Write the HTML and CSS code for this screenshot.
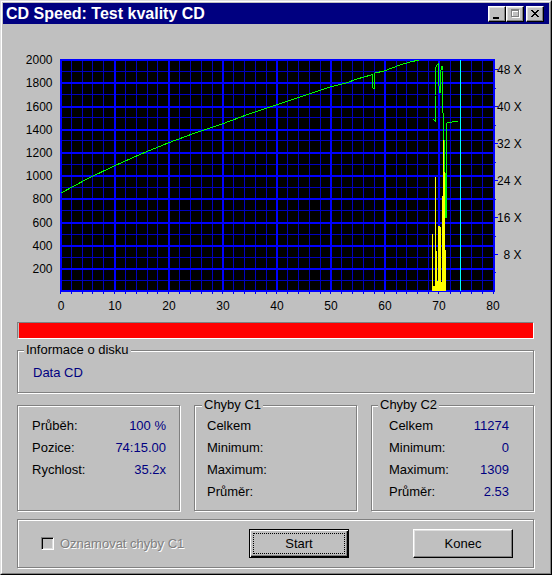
FILE: index.html
```html
<!DOCTYPE html>
<html lang="cs">
<head>
<meta charset="utf-8">
<title>CD Speed: Test kvality CD</title>
<link rel="stylesheet" href="styles.css">
</head>
<body>
<div class="window">
  <div class="frame">
    <div class="titlebar">
      <span class="title">CD Speed: Test kvality CD</span>
      <div class="tb-buttons">
        <span class="tb-btn"><svg class="tb-glyph" width="16" height="14" viewBox="0 0 16 14"><rect x="4" y="10" width="6" height="2" class="g-black"/></svg></span>
        <span class="tb-btn"><svg class="tb-glyph" width="16" height="14" viewBox="0 0 16 14"><path class="g-white" d="M5 3h8v2h-8z M5 5h1v6h-1z M12 5h1v6h-1z M5 10h8v1h-8z"/><path class="g-gray" d="M4 2h8v2h-8z M4 4h1v6h-1z M11 4h1v6h-1z M4 9h8v1h-8z"/></svg></span>
        <span class="tb-btn tb-close"><svg class="tb-glyph" width="16" height="14" viewBox="0 0 16 14"><path class="g-black" d="M4 3h2v1h-2z M10 3h2v1h-2z M5 4h2v1h-2z M9 4h2v1h-2z M6 5h4v1h-4z M7 6h2v1h-2z M6 7h4v1h-4z M5 8h2v1h-2z M9 8h2v1h-2z M4 9h2v1h-2z M10 9h2v1h-2z"/></svg></span>
      </div>
    </div>
    <div class="client">
      <svg class="chart" width="546" height="292" viewBox="3 24 546 292" shape-rendering="crispEdges">
        <rect x="60" y="59" width="435" height="233" class="plot-bg"/>
        <g class="grid-minor">
          <rect x="60" y="71" width="435" height="1"/>
          <rect x="60" y="94" width="435" height="1"/>
          <rect x="60" y="117" width="435" height="1"/>
          <rect x="60" y="140" width="435" height="1"/>
          <rect x="60" y="164" width="435" height="1"/>
          <rect x="60" y="187" width="435" height="1"/>
          <rect x="60" y="210" width="435" height="1"/>
          <rect x="60" y="234" width="435" height="1"/>
          <rect x="60" y="257" width="435" height="1"/>
          <rect x="60" y="280" width="435" height="1"/>
          <rect x="71" y="59" width="1" height="233"/>
          <rect x="82" y="59" width="1" height="233"/>
          <rect x="92" y="59" width="1" height="233"/>
          <rect x="103" y="59" width="1" height="233"/>
          <rect x="125" y="59" width="1" height="233"/>
          <rect x="136" y="59" width="1" height="233"/>
          <rect x="147" y="59" width="1" height="233"/>
          <rect x="157" y="59" width="1" height="233"/>
          <rect x="179" y="59" width="1" height="233"/>
          <rect x="190" y="59" width="1" height="233"/>
          <rect x="201" y="59" width="1" height="233"/>
          <rect x="212" y="59" width="1" height="233"/>
          <rect x="233" y="59" width="1" height="233"/>
          <rect x="244" y="59" width="1" height="233"/>
          <rect x="255" y="59" width="1" height="233"/>
          <rect x="266" y="59" width="1" height="233"/>
          <rect x="287" y="59" width="1" height="233"/>
          <rect x="298" y="59" width="1" height="233"/>
          <rect x="309" y="59" width="1" height="233"/>
          <rect x="320" y="59" width="1" height="233"/>
          <rect x="341" y="59" width="1" height="233"/>
          <rect x="352" y="59" width="1" height="233"/>
          <rect x="363" y="59" width="1" height="233"/>
          <rect x="374" y="59" width="1" height="233"/>
          <rect x="396" y="59" width="1" height="233"/>
          <rect x="406" y="59" width="1" height="233"/>
          <rect x="417" y="59" width="1" height="233"/>
          <rect x="428" y="59" width="1" height="233"/>
          <rect x="450" y="59" width="1" height="233"/>
          <rect x="471" y="59" width="1" height="233"/>
          <rect x="482" y="59" width="1" height="233"/>
        </g>
        <g class="grid-major">
          <rect x="60" y="59" width="435" height="2"/>
          <rect x="60" y="82" width="435" height="2"/>
          <rect x="60" y="106" width="435" height="2"/>
          <rect x="60" y="129" width="435" height="2"/>
          <rect x="60" y="152" width="435" height="2"/>
          <rect x="60" y="175" width="435" height="2"/>
          <rect x="60" y="198" width="435" height="2"/>
          <rect x="60" y="222" width="435" height="2"/>
          <rect x="60" y="245" width="435" height="2"/>
          <rect x="60" y="268" width="435" height="2"/>
          <rect x="60" y="290" width="435" height="2"/>
          <rect x="60" y="59" width="2" height="233"/>
          <rect x="114" y="59" width="2" height="233"/>
          <rect x="168" y="59" width="2" height="233"/>
          <rect x="222" y="59" width="2" height="233"/>
          <rect x="276" y="59" width="2" height="233"/>
          <rect x="330" y="59" width="2" height="233"/>
          <rect x="384" y="59" width="2" height="233"/>
          <rect x="438" y="59" width="2" height="233"/>
          <rect x="493" y="59" width="2" height="233"/>
          <!-- bottom ticks -->
          <rect x="60" y="292" width="1" height="2"/><rect x="71" y="292" width="1" height="2"/><rect x="82" y="292" width="1" height="2"/><rect x="92" y="292" width="1" height="2"/><rect x="103" y="292" width="1" height="2"/>
          <rect x="114" y="292" width="1" height="2"/><rect x="125" y="292" width="1" height="2"/><rect x="136" y="292" width="1" height="2"/><rect x="147" y="292" width="1" height="2"/><rect x="157" y="292" width="1" height="2"/>
          <rect x="168" y="292" width="1" height="2"/><rect x="179" y="292" width="1" height="2"/><rect x="190" y="292" width="1" height="2"/><rect x="201" y="292" width="1" height="2"/><rect x="212" y="292" width="1" height="2"/>
          <rect x="222" y="292" width="1" height="2"/><rect x="233" y="292" width="1" height="2"/><rect x="244" y="292" width="1" height="2"/><rect x="255" y="292" width="1" height="2"/><rect x="266" y="292" width="1" height="2"/>
          <rect x="276" y="292" width="1" height="2"/><rect x="287" y="292" width="1" height="2"/><rect x="298" y="292" width="1" height="2"/><rect x="309" y="292" width="1" height="2"/><rect x="320" y="292" width="1" height="2"/>
          <rect x="330" y="292" width="1" height="2"/><rect x="341" y="292" width="1" height="2"/><rect x="352" y="292" width="1" height="2"/><rect x="363" y="292" width="1" height="2"/><rect x="374" y="292" width="1" height="2"/>
          <rect x="384" y="292" width="1" height="2"/><rect x="396" y="292" width="1" height="2"/><rect x="406" y="292" width="1" height="2"/><rect x="417" y="292" width="1" height="2"/><rect x="428" y="292" width="1" height="2"/>
          <rect x="438" y="292" width="1" height="2"/><rect x="450" y="292" width="1" height="2"/><rect x="460" y="292" width="1" height="2"/><rect x="471" y="292" width="1" height="2"/><rect x="482" y="292" width="1" height="2"/><rect x="493" y="292" width="1" height="2"/>
          <!-- right ticks -->
          <rect x="495" y="69" width="3" height="1"/>
          <rect x="495" y="106" width="3" height="1"/>
          <rect x="495" y="143" width="3" height="1"/>
          <rect x="495" y="180" width="3" height="1"/>
          <rect x="495" y="217" width="3" height="1"/>
          <rect x="495" y="254" width="3" height="1"/>
          <rect x="495" y="88" width="1" height="1"/>
          <rect x="495" y="125" width="1" height="1"/>
          <rect x="495" y="162" width="1" height="1"/>
          <rect x="495" y="199" width="1" height="1"/>
          <rect x="495" y="236" width="1" height="1"/>
          <rect x="495" y="272" width="1" height="1"/>
        </g>
        <g class="bars">
          <rect x="432" y="234" width="1" height="57"/>
          <rect x="433" y="286" width="2" height="5"/>
          <rect x="435" y="177" width="1" height="114"/>
          <rect x="436" y="251" width="1" height="40"/>
          <rect x="437" y="281" width="1" height="10"/>
          <rect x="438" y="226" width="2" height="65"/>
          <rect x="440" y="227" width="1" height="64"/>
          <rect x="441" y="282" width="1" height="9"/>
          <rect x="442" y="196" width="1" height="95"/>
          <rect x="443" y="139" width="1" height="152"/>
          <rect x="444" y="156" width="1" height="135"/>
          <rect x="445" y="250" width="1" height="41"/>
        </g>
        <polyline class="speed" points="61,193 87,179 114,166 141,154 168,143 195,133 222,124 249,114 276,105 303,96 330,87 342,84 346,83 357,79 371,75 372,74 373,88 374,89 375,73 384,71 400,65 410,62 419,60"/>
        <polyline class="speed" points="433,119 435,121 435,96 436,67 437,65 438,64 438,67 439,86 440,93 440,80 441,70 442,66 442,70 443,113 444,140 445,172 446,218 446,123 447,123 452,122 458,121"/>
        <rect x="460" y="60" width="1" height="231" class="cursor"/>
        <g class="axis-label">
          <text x="52.5" y="64" text-anchor="end">2000</text>
          <text x="52.5" y="87" text-anchor="end">1800</text>
          <text x="52.5" y="111" text-anchor="end">1600</text>
          <text x="52.5" y="134" text-anchor="end">1400</text>
          <text x="52.5" y="157" text-anchor="end">1200</text>
          <text x="52.5" y="180" text-anchor="end">1000</text>
          <text x="52.5" y="203" text-anchor="end">800</text>
          <text x="52.5" y="227" text-anchor="end">600</text>
          <text x="52.5" y="250" text-anchor="end">400</text>
          <text x="52.5" y="273" text-anchor="end">200</text>
          <text x="61" y="309.5" text-anchor="middle">0</text>
          <text x="115" y="309.5" text-anchor="middle">10</text>
          <text x="169" y="309.5" text-anchor="middle">20</text>
          <text x="223" y="309.5" text-anchor="middle">30</text>
          <text x="277" y="309.5" text-anchor="middle">40</text>
          <text x="331" y="309.5" text-anchor="middle">50</text>
          <text x="385" y="309.5" text-anchor="middle">60</text>
          <text x="439" y="309.5" text-anchor="middle">70</text>
          <text x="493" y="309.5" text-anchor="middle">80</text>
          <text x="497" y="74">48 X</text>
          <text x="497" y="111">40 X</text>
          <text x="497" y="148">32 X</text>
          <text x="497" y="184.5">24 X</text>
          <text x="497" y="221.5">16 X</text>
          <text x="503.5" y="258.5">8 X</text>
        </g>
      </svg>

      <div class="progress"><div class="progress-fill"></div></div>

      <div class="group info">
        <span class="group-label">Informace o disku</span>
        <div class="disc-type">Data CD</div>
      </div>

      <div class="stats">
        <div class="group stat-box box-status">
          <div class="row"><span>Průběh:</span><span class="val">100 %</span></div>
          <div class="row"><span>Pozice:</span><span class="val">74:15.00</span></div>
          <div class="row"><span>Rychlost:</span><span class="val">35.2x</span></div>
        </div>
        <div class="group stat-box box-c1">
          <span class="group-label label-c1">Chyby C1</span>
          <div class="row"><span>Celkem</span></div>
          <div class="row"><span>Minimum:</span></div>
          <div class="row"><span>Maximum:</span></div>
          <div class="row"><span>Průměr:</span></div>
        </div>
        <div class="group stat-box box-c2">
          <span class="group-label">Chyby C2</span>
          <div class="row"><span>Celkem</span><span class="val">11274</span></div>
          <div class="row"><span>Minimum:</span><span class="val">0</span></div>
          <div class="row"><span>Maximum:</span><span class="val">1309</span></div>
          <div class="row"><span>Průměr:</span><span class="val">2.53</span></div>
        </div>
      </div>

      <div class="group actions">
        <div class="check">
          <span class="checkbox"></span>
          <span class="check-text">Oznamovat chyby C1</span>
        </div>
        <button class="btn btn-default" type="button">Start</button>
        <button class="btn btn-close" type="button">Konec</button>
      </div>
    </div>
  </div>
</div>
</body>
</html>
```

FILE: styles.css
```css
html, body {
  margin: 0;
  padding: 0;
  background: #c0c0c0;
}

body {
  font-family: "Liberation Sans", Arial, sans-serif;
  font-size: 13px;
  color: #000;
}

.window {
  width: 552px;
  height: 575px;
  box-sizing: border-box;
  border: 1px solid;
  border-color: #dfdfdf #000 #000 #dfdfdf;
  background: #c0c0c0;
}

.frame {
  height: 100%;
  box-sizing: border-box;
  border: 1px solid;
  border-color: #fff #808080 #808080 #fff;
  padding: 1px;
}

.titlebar {
  height: 21px;
  background: #000080;
  display: flex;
  align-items: center;
  justify-content: space-between;
  padding: 0 5px 0 3px;
}

.title {
  color: #fff;
  font-weight: bold;
  font-size: 16px;
  line-height: 21px;
  white-space: nowrap;
}

.tb-buttons {
  display: flex;
  align-items: center;
}

.tb-btn {
  width: 18px;
  height: 16px;
  box-sizing: border-box;
  border: 1px solid;
  border-color: #fff #000 #000 #fff;
  box-shadow: inset -1px -1px 0 #808080, inset 1px 1px 0 #dfdfdf;
  background: #c0c0c0;
  display: flex;
  align-items: center;
  justify-content: center;
}

.tb-close {
  margin-left: 2px;
}

.tb-glyph {
  display: block;
  shape-rendering: crispEdges;
}

.g-black { fill: #000; }
.g-gray { fill: #808080; }
.g-white { fill: #fff; }

.client {
  display: flex;
  flex-direction: column;
}

.chart {
  display: block;
}

.plot-bg { fill: #000; }
.grid-minor { fill: #0000c0; }
.grid-major { fill: #0000ff; }
.bars { fill: #ffff00; }
.speed {
  fill: none;
  stroke: #00ff00;
  stroke-width: 1;
}
.cursor { fill: #00ffff; }

.axis-label {
  font-family: "Liberation Sans", Arial, sans-serif;
  font-size: 12px;
  fill: #000;
}

.progress {
  margin: 6px 15px 0 14px;
  height: 17px;
  box-sizing: border-box;
  border: 1px solid;
  border-color: #808080 #fff #fff #808080;
  padding: 0 0 0 1px;
}

.progress-fill {
  height: 100%;
  background: #ff0000;
}

.group {
  position: relative;
  box-sizing: border-box;
  border: 1px solid #808080;
  box-shadow: 1px 1px 0 #fff, inset 1px 1px 0 #fff;
}

.group-label {
  position: absolute;
  top: -9px;
  left: 6px;
  padding: 0 2px;
  background: #c0c0c0;
  line-height: 15px;
  white-space: nowrap;
}

.label-c1 {
  left: 7px;
}

.info {
  margin: 11px 15px 0 14px;
  height: 43px;
  padding: 14px 0 0 15px;
}

.disc-type {
  color: #000080;
  line-height: 15px;
}

.stats {
  margin: 12px 15px 0 14px;
  display: flex;
  justify-content: space-between;
}

.stat-box {
  width: 163px;
  height: 106px;
  padding-top: 9px;
}

.box-status {
  padding-left: 14px;
  padding-right: 13px;
}

.box-c1 {
  padding-left: 12px;
  padding-right: 12px;
}

.box-c2 {
  padding-left: 17px;
  padding-right: 24px;
}

.row {
  display: flex;
  justify-content: space-between;
  line-height: 22px;
  white-space: nowrap;
}

.val {
  color: #000080;
}

.actions {
  margin: 8px 15px 0 14px;
  height: 49px;
  display: flex;
  align-items: center;
  padding-left: 23px;
}

.check {
  width: 208px;
  display: flex;
  align-items: center;
}

.checkbox {
  width: 13px;
  height: 13px;
  box-sizing: border-box;
  border: 1px solid;
  border-color: #808080 #fff #fff #808080;
  box-shadow: inset 1px 1px 0 #000, inset -1px -1px 0 #dfdfdf;
  background: #c0c0c0;
  flex: none;
}

.check-text {
  margin-left: 6px;
  color: #808080;
  text-shadow: 1px 1px 0 #fff;
  white-space: nowrap;
}

.btn {
  width: 100px;
  height: 29px;
  padding: 0;
  font-family: "Liberation Sans", Arial, sans-serif;
  font-size: 13px;
  color: #000;
  background: #c0c0c0;
  border: 1px solid;
  border-color: #fff #000 #000 #fff;
  box-shadow: inset -1px -1px 0 #808080, inset 1px 1px 0 #dfdfdf;
}

.btn-default {
  border-color: #000;
  box-shadow: inset 1px 1px 0 #fff, inset -1px -1px 0 #000, inset -2px -2px 0 #808080;
  outline: 1px dotted #000;
  outline-offset: -5px;
}

.btn-close {
  margin-left: 64px;
}
```
